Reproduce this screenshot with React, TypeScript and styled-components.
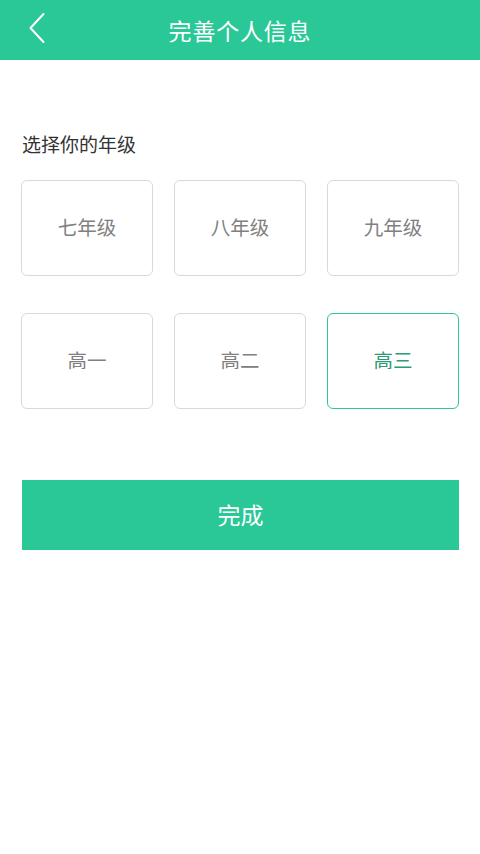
import React, { useState } from 'react'
import styled, { createGlobalStyle } from 'styled-components'

const GlobalStyle = createGlobalStyle`
  html, body {
    margin: 0;
    padding: 0;
    background: #fff;
  }
  body {
    font-family: 'Noto Sans CJK SC', 'Noto Sans', sans-serif;
  }
  * {
    box-sizing: border-box;
  }
`

const Page = styled.div`
  width: 480px;
  min-height: 854px;
  background: #fff;
  display: flex;
  flex-direction: column;
`

const Header = styled.div`
  height: 60px;
  background: #2bc897;
  display: flex;
  align-items: center;
  justify-content: center;
  position: relative;
`

const BackButton = styled.button`
  position: absolute;
  left: 22px;
  top: 10px;
  width: 30px;
  height: 36px;
  background: none;
  border: none;
  padding: 0;
  display: flex;
  align-items: center;
  justify-content: center;
  cursor: pointer;
`

const Title = styled.h1`
  margin: 0;
  color: #fff;
  font-size: 23px;
  font-weight: 400;
  letter-spacing: 0.8px;
`

const Body = styled.div`
  padding: 70px 21px 0;
  display: flex;
  flex-direction: column;
`

const SectionLabel = styled.div`
  color: #333;
  font-size: 19px;
  line-height: 28px;
  margin-left: 1px;
`

const GradeGrid = styled.div`
  margin-top: 22px;
  display: grid;
  grid-template-columns: repeat(3, 1fr);
  column-gap: 21px;
  row-gap: 37px;
`

const GradeCard = styled.button<{ $selected?: boolean }>`
  height: 96px;
  border-radius: 6px;
  background: #fff;
  border: 1.5px solid ${p => (p.$selected ? '#2bc897' : '#d9d9d9')};
  color: ${p => (p.$selected ? '#2e9b78' : '#808080')};
  font-family: inherit;
  font-size: 19.5px;
  display: flex;
  align-items: center;
  justify-content: center;
  cursor: pointer;
  padding: 0 0 3px;
`

const SubmitButton = styled.button`
  margin-top: 71px;
  margin-left: 1px;
  height: 70px;
  border: none;
  background: #2bc897;
  color: #fff;
  font-family: inherit;
  font-size: 23px;
  padding: 0 0 3px;
  cursor: pointer;
`

const grades = ['七年级', '八年级', '九年级', '高一', '高二', '高三']

export default function App() {
  const [selected, setSelected] = useState('高三')

  return (
    <Page>
      <GlobalStyle />
      <Header>
        <BackButton aria-label="返回">
          <svg width="18" height="32" viewBox="0 0 18 32" fill="none">
            <path d="M15.5 2 L2.5 16 L15.5 30" stroke="#fff" strokeWidth="2" strokeLinecap="round" strokeLinejoin="round" />
          </svg>
        </BackButton>
        <Title>完善个人信息</Title>
      </Header>
      <Body>
        <SectionLabel>选择你的年级</SectionLabel>
        <GradeGrid>
          {grades.map(g => (
            <GradeCard key={g} $selected={selected === g} onClick={() => setSelected(g)}>
              {g}
            </GradeCard>
          ))}
        </GradeGrid>
        <SubmitButton>完成</SubmitButton>
      </Body>
    </Page>
  )
}
